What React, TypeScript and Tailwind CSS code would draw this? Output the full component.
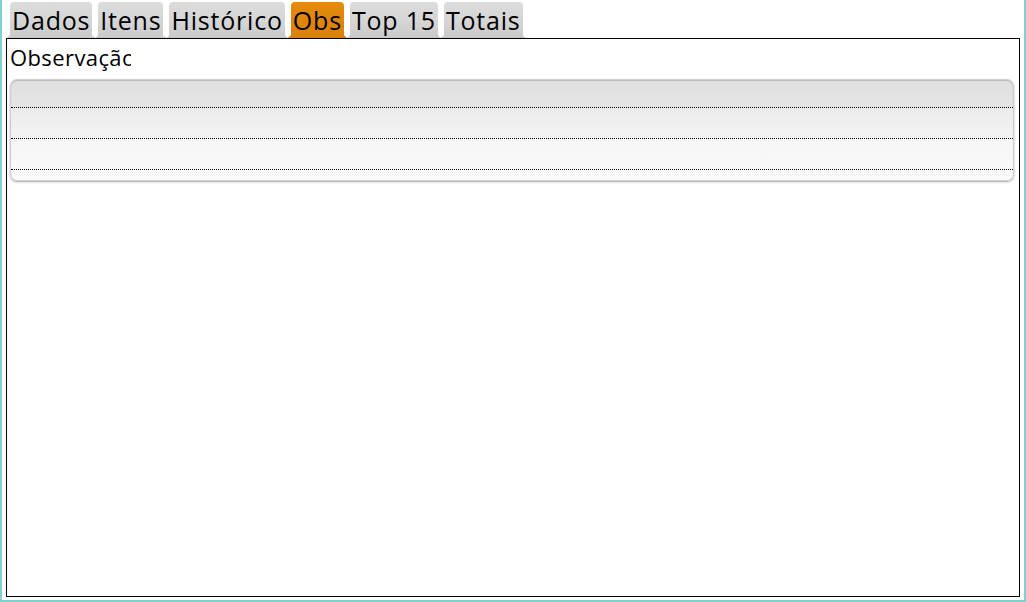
const tabs = ["Dados", "Itens", "Histórico", "Obs", "Top 15", "Totais"];
const active = "Obs";

function Tab({ label }: { label: string }) {
  const on = label === active;
  const flare = on ? "bg-[#d9810c]" : "bg-[#cbcbcb]";
  return (
    <div className="relative">
      <div
        className={
          "h-[36px] px-[2px] rounded-t-[4px] leading-[36px] text-[25px] tracking-[0.8px] text-black " +
          (on
            ? "bg-gradient-to-b from-[#e58a0b] to-[#d9810c]"
            : "bg-gradient-to-b from-[#dcdcdc] via-[#d6d6d6] to-[#c9c9c9]")
        }
      >
        {label}
      </div>
      <div
        className={"absolute -right-[3px] bottom-0 w-[3px] h-[3px] " + flare}
        style={{ clipPath: "polygon(0 0, 0 100%, 100% 100%)" }}
      />
      <div
        className={"absolute -left-[3px] bottom-0 w-[3px] h-[3px] " + flare}
        style={{ clipPath: "polygon(100% 0, 0 100%, 100% 100%)" }}
      />
    </div>
  );
}

function Row({ tone, h }: { tone: string; h: string }) {
  return <div className={h + " border-b border-dotted border-black " + tone} />;
}

export default function App() {
  return (
    <div
      className="w-[1026px] h-[602px] bg-white border-l-2 border-r-2 border-b-2 border-[#7fd0d0] flex flex-col"
      style={{ fontFamily: "'Open Sans', 'Noto Sans', sans-serif" }}
    >
      <div className="flex gap-[6px] pl-[8px] pt-[2px] h-[38px]">
        {tabs.map((t) => (
          <Tab key={t} label={t} />
        ))}
      </div>
      <div className="ml-[4px] mr-[4px] mb-[3px] flex-1 border border-black px-[3px] pt-[4px]">
        {/* label is clipped in the original as well */}
        <div className="w-[121px] overflow-hidden whitespace-nowrap text-[22px] tracking-[0.4px] leading-[28px] text-black">
          Observação
        </div>
        <div className="mt-[8px] mr-[2px] rounded-[7px] border border-[#d0d0d0] bg-gradient-to-b from-[#dedede] via-[#f2f2f2] to-[#fafafa] shadow-[0_1px_2px_rgba(0,0,0,0.35),inset_0_1px_1px_rgba(0,0,0,0.3)] pb-[10px] overflow-hidden">
          <Row h="h-[28px]" tone="bg-[#e0e0e0]/40" />
          <Row h="h-[31px]" tone="bg-[#f0f0f0]/40" />
          <Row h="h-[31px]" tone="bg-[#fafafa]/40" />
        </div>
      </div>
    </div>
  );
}
